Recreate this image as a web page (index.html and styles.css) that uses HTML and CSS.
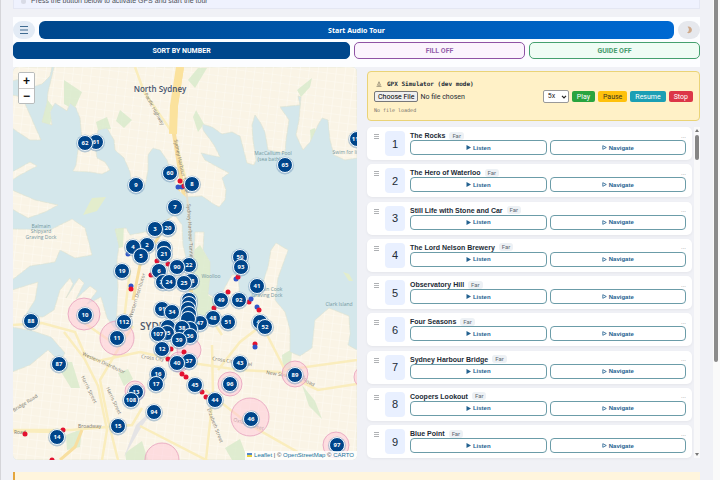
FILE: index.html
```html
<!DOCTYPE html>
<html lang="en">
<head>
<meta charset="utf-8">
<meta name="viewport" content="width=device-width, initial-scale=1">
<title>Sydney Audio Tour</title>
<link rel="stylesheet" href="styles.css">
</head>
<body>
<div class="page">
  <div class="content">
    <div class="notice"><span class="notice-dot"></span><span>Press the button below to activate GPS and start the tour</span></div>
    <header class="toolbar">
      <div class="toolbar-row">
        <button class="round" aria-label="Menu"><svg width="10" height="10" viewBox="0 0 10 10"><path d="M1 1.500h8M1 5h8M1 8.500h8" stroke="#3f6b91" stroke-width="1" fill="none"/></svg></button>
        <button class="start">Start Audio Tour</button>
        <button class="round moon" aria-label="Dark mode"><svg width="8" height="8" viewBox="0 0 8 8"><path d="M2.500.8A3.300 3.300 0 1 1 2 6.800 3.600 3.600 0 0 0 2.500.8Z" fill="#cfa98a"/></svg></button>
      </div>
      <div class="modes">
        <button class="mode sort">SORT BY NUMBER</button>
        <button class="mode fill">FILL OFF</button>
        <button class="mode guide">GUIDE OFF</button>
      </div>
    </header>
    <main class="main">
      <section class="map" aria-label="Tour map">
        <svg class="map-art" viewBox="13 67 344 393" preserveAspectRatio="xMidYMid slice">
          <defs>
            <clipPath id="land-clip"><use href="#land"/></clipPath>
            <pattern id="blocks" width="9" height="8" patternUnits="userSpaceOnUse" patternTransform="rotate(7)"><path d="M0 0H9M0 0V8" stroke="#fffdf8" stroke-width="1.100" fill="none"/></pattern>
          </defs>
          <rect x="12" y="67" width="345" height="393" fill="#d4e7eb"/>
          <path id="land" fill="#faf4e6" stroke="#e0e4d2" stroke-width=".7" d="M12 67H52L50 76 42 84 35 86 20 79 12 81Z
            M54 67 51 80 48 92 47 103 42 122 52 125 50 112 55 103 67 111 70 103 76 108 80 118 82 140 78 150 76 165 73 171 90 172 102 174 110 170 105 162 97 158 95 145 98 130 107 128 114 140 115 150 124 158 130 172 132 185 137 190 145 186 148 170 148 155 153 148 160 150 167 160 172 175 178 190 186 197 202 196 212 203 219 207 225 200 226 190 222 178 229 173 214 165 205 160 201 153 210 155 220 157 214 145 203 130 202 124 212 127 222 134 232 132 240 136 245 155 247 163 254 165 256 160 253 140 252 125 255 115 260 122 265 132 268 150 285 153 286 140 289 120 280 107 300 105 298 96 301 97 299 120 296 135 303 150 310 142 318 125 322 118 328 120 330 140 334 155 345 160 357 158V67Z
            M12 95 22 97 30 115 41 140 30 140 12 128Z M12 172 30 162 37 166 20 175 12 180Z
            M12 190 35 200 58 205 45 212 28 218 12 209Z
            M12 229 50 230 72 219 85 228 92 255 75 258 60 250 55 262 30 266 12 280Z
            M12 290 38 282 35 300 25 316 43 317 54 310 60 290 70 278 73 284 66 298 79 278 84 283 76 299 90 286 97 291 87 304 101 297 107 318 116 330 118 290 117 260 119 246 115 229 126 228 130 235 150 231 160 224 175 215 182 225 183 245 187 262 194 262 195 232 204 232 203 250 210 262 210 275 208 294 219 300 225 287 232 275 238 275 240 298 252 300 260 292 268 267 271 250 276 243 288 250 278 278 275 300 285 312 290 330 290 352 300 356 312 348 315 320 329 308 349 316 350 334 348 345 357 350V460H12V372L30 365 48 350 60 362 65 353 51 337 33 331 12 327Z"/>
          <g clip-path="url(#land-clip)">
            <rect x="12" y="67" width="345" height="393" fill="url(#blocks)" opacity=".75"/>
            <g fill="#d8eacb" opacity=".8">
              <path d="M46 98 54 108 50 125 40 122ZM96 122 107 117 111 129 98 130ZM64 80l18 12-8 18-10-6ZM120 110l12 10-8 8-8-7ZM188 80l10-12h9l-12 20ZM196 110l8 14-6 8-5-15ZM297 90l15-12-2 9-9 10ZM310 130l5-2 2 12-6 5Z"/>
              <path d="M188 255 200 245 212 265 208 295 218 302 203 325 188 305ZM115 229l9-4-1 22-8 2ZM55 362l17 0 8 26-9 0ZM118 373l10-4 5 10-9 7ZM125 453l17-12 6 19h-22ZM225 448l15-9 8 21h-16ZM302 385l13 16 7 18-13-13ZM66 435l16-6-2 18-13 3ZM282 355l10-6-1 18-8 7Z"/>
            </g>
            <path d="M124 457 136 425 158 404 142 426Z" fill="#e5e4e5"/>
            <g fill="none" stroke="#faedbd" stroke-width="2.500">
              <path d="M135 67 144 92 174 135 186 180"/><path d="M12 325 42 323 75 332 85 355 98 361 140 352"/><path d="M64 332 84 358 98 386 107 430 102 460M133 326 120 346 100 380 108 420 118 460M140 426 210 462M212 345 213 395 206 460M130 270 124 320 116 345 80 320"/>
              <path d="M12 430H70L132 425 142 408M12 431 50 432 55 430M140 352 185 362 240 370 280 372 318 390 357 384M218 370 240 342 262 325 285 370 357 360M205 390 250 425 310 459M212 320 222 335"/>
            </g>
            <g fill="none" stroke="#f8dfa0" stroke-width="4">
              <path d="M182 67 176 105 174 134 183 190 191 250 191 330"/><path d="M181 184 170 214 158 238 140 265 133 300" stroke-width="3"/><path d="M60 460 75 447 82 430" stroke-width="3"/>
            </g>
            <path d="M180 67 174 106 173 134" stroke="#fbe29d" stroke-width="8" fill="none"/>
          </g>
          <path d="M83 215 92 198 106 197 97 211ZM343 272l6 2 4 7-4 0Z" fill="#e3edcc"/>
          <path d="M186 186 193 258" stroke="#e6dfcc" stroke-width="2"/>
          <g class="street">
            <text transform="translate(144 94) rotate(61)">Pacific Highway</text>
            <text transform="translate(174 140) rotate(78)">Sydney Harbour Tunnel</text>
            <text transform="translate(187 204) rotate(87)">Sydney Harbour Tunnel</text>
            <text transform="translate(132 318) rotate(-73)">Western Distributor</text>
            <text transform="translate(82 355) rotate(24)">Western Distributor</text>
            <text transform="translate(81 377) rotate(64)">Harris Street</text>
            <text transform="translate(106 388) rotate(65)">Harris Street</text>
            <text transform="translate(14 412) rotate(-32)">Bridge Road</text>
            <text x="14" y="434">Road</text><text x="78" y="428">Broadway</text>
            <text transform="translate(141 358) rotate(8)">Cross City Tunnel</text>
            <text transform="translate(212 360) rotate(9)">Cross City Tunnel</text>
            <text transform="translate(266 374) rotate(8)">New South Head</text>
            <text transform="translate(303 381) rotate(28)">Road</text>
            <text transform="translate(233 421) rotate(17)">Oxford Street</text>
            <text transform="translate(207 409) rotate(69)">Elizabeth Street</text>
          </g>
          <g class="water-label">
            <text x="41" y="228">Balmain</text><text x="41" y="233">Shipyard</text><text x="41" y="239">Graving Dock</text>
            <text x="273" y="155">MacCallum Pool</text><text x="269" y="161">(sea bath)</text><text x="347" y="154">Swim for life</text>
            <text x="267" y="291">Captain Cook</text><text x="267" y="297">Graving Dock</text><text x="211" y="278">Woolloo</text><text x="339" y="306">Clark Island</text>
          </g>
          <text class="district" x="160" y="92">North Sydney</text>
          <text class="city" x="140" y="330">SYDNEY</text>
          <g id="zones"></g>
          <g id="stops"></g>
          <g id="markers"></g>
        </svg>
        <div class="zoom"><button aria-label="Zoom in">+</button><button aria-label="Zoom out">−</button></div>
        <div class="credit"><span class="flag"></span><a href="#leaflet">Leaflet</a> | © <a href="#osm">OpenStreetMap</a> © <a href="#carto">CARTO</a></div>
      </section>
      <section class="side">
        <form class="sim">
          <div class="sim-title"><svg width="6" height="6" viewBox="0 0 6 6"><path d="M3 .7 1.600 4.200H4.400ZM.5 5.400h5" stroke="#8f8671" stroke-width=".8" fill="none"/></svg>GPX Simulator (dev mode)</div>
          <div class="sim-row">
            <input class="file" type="file" aria-label="GPX file">
            <span class="speed">
              <select aria-label="Speed"><option>5x</option></select>
              <svg width="6" height="4" viewBox="0 0 6 4"><path d="M1 .8 3 2.800 5 .8" stroke="#222" stroke-width="1.200" fill="none"/></svg>
            </span>
            <button type="button" class="play">Play</button>
            <button type="button" class="pause">Pause</button>
            <button type="button" class="resume">Resume</button>
            <button type="button" class="stop">Stop</button>
          </div>
          <div class="sim-status">No file loaded</div>
        </form>
        <div class="list-wrap">
          <ol class="list" id="list"></ol>
          <div class="list-bar"><i class="up"></i><i class="thumb"></i><i class="down"></i></div>
        </div>
      </section>
    </main>
    <div class="banner"></div>
  </div>
  <div class="page-bar"><i></i></div>
</div>
<script src="script.js"></script>
</body>
</html>
```
FILE: styles.css
```css
* { box-sizing: border-box; }
body { margin: 0; height: 100vh; overflow: hidden; background: #f0f1f6; font-family: "Liberation Sans", Arial, sans-serif; color: #222b36; }
button, select, input { font: inherit; margin: 0; }
button { cursor: pointer; padding: 0; }
.page { display: flex; height: 100vh; border-left: 1px solid #d5d5d9; }
.content { flex: 1; min-width: 0; padding: 0 13px 0 12px; overflow: hidden; }
.page-bar { width: 7px; background: #fafafa; padding: 0 2px 0 1px; }
.page-bar i { display: block; height: 75.5vh; background: #8b8b8b; border-radius: 0 0 2px 2px; }

.notice { height: 9px; display: flex; align-items: flex-end; gap: 5px; padding: 0 0 3px 7px; background: #eff2fe; border: 1px solid #e4e7f3; border-top: 0; font-size: 7px; line-height: 8px; color: #4b5058; }
.notice-dot { width: 5px; height: 5px; margin-bottom: 1px; border-radius: 50%; background: #d8dbe6; }

.toolbar { margin-top: 8px; padding: 4px 0 8px; background: #fcfdff; }
.toolbar-row { display: flex; gap: 4px; margin-bottom: 3px; }
.toolbar-row button { height: 18px; border: 0; }
.round { display: grid; place-items: center; width: 22px; border-radius: 9px; background: #e3ebf5; }
.toolbar-row .moon { background: #e6e8ed; }
.start { flex: 1; border-radius: 6px; background: linear-gradient(100deg, #00478c, #0069d2); color: #fff; font: bold 7px "Noto Sans", sans-serif; }
.toolbar-row .start { font: bold 7px "DejaVu Sans", sans-serif; font-family: "Noto Sans", sans-serif; }
.modes { display: grid; grid-template-columns: 337fr 171fr 171fr; gap: 4px; }
.mode { height: 17px; border: 1px solid; border-radius: 5px; font: bold 7px Roboto, sans-serif; }
.sort { background: #00478c; border-color: #00478c; color: #fff; }
.fill { background: #fbf4fd; border-color: #8f53a4; color: #9560ab; }
.guide { background: #effcf4; border-color: #45a06e; color: #459b6c; }

.main { display: grid; grid-template-columns: 344fr 333fr; gap: 10px; min-height: 393px; }
.map { position: relative; overflow: hidden; border-radius: 5px; background: #d4e7eb; }
.map-art { position: absolute; inset: 0; width: 100%; height: 100%; }
.zoom { position: absolute; left: 5px; top: 5px; display: grid; border: 1px solid #b9bcbc; border-radius: 2px; overflow: hidden; }
.zoom button { width: 15px; height: 15px; border: 0; background: #fff; color: #111; font-size: 12px; font-weight: bold; line-height: 14px; }
.zoom button + button { border-top: 1px solid #ccc; }
.credit { position: absolute; right: 0; bottom: 0; padding: 0 3px 0 2px; background: #fffc; font-size: 6px; line-height: 9px; color: #444; }
.credit a { color: #16739c; text-decoration: none; }
.flag { display: inline-block; width: 5px; height: 4px; margin-right: 2px; background: linear-gradient(#5387c8 50%, #e5cf3e 50%); }

.street { font: 5px "Open Sans", sans-serif; fill: #7d796e; }
.water-label { font: 5px "Open Sans", sans-serif; fill: #7297a1; text-anchor: middle; }
.district { font: 600 8px "Open Sans", sans-serif; fill: #46546f; text-anchor: middle; }
.city { font: 600 10px "Open Sans", sans-serif; fill: #4f5a6d; }
.pin { fill: #00458a; stroke: #f4fafd; stroke-width: 1; }
.halo { fill: #7199bd; opacity: .5; }
.pin-text { font: bold 6px "Open Sans", sans-serif; fill: #fff; text-anchor: middle; }
.zone { fill: #ffc5d8; fill-opacity: .5; stroke: #e6a0bc; stroke-width: .8; }
.red { fill: #e41230; }
.blue { fill: #3156c8; }

.side { display: flex; flex-direction: column; padding-top: 4px; }
.sim { padding: 6px; border: 1px solid #ead377; border-radius: 4px; background: #fff1c7; font: 7px Roboto, sans-serif; }
.sim-title { display: flex; align-items: center; gap: 5px; padding-left: 2px; font: bold 6px/11px "DejaVu Sans Mono", monospace; }
.sim-row { display: flex; align-items: center; gap: 3px; height: 13px; margin-top: 1px; }
.file { flex: 1; min-width: 0; font-size: 7px; line-height: 10px; }
.file::file-selector-button { height: 11px; margin: 0 2px 0 0; padding: 0 3px; border: 1px solid #777; border-radius: 2px; background: #efefef; font: 7px/8px Roboto, sans-serif; }
.speed { display: grid; align-items: center; }
.speed > * { grid-area: 1 / 1; }
.speed svg { justify-self: end; margin-right: 2px; pointer-events: none; }
.sim select { appearance: none; width: 26px; height: 13px; padding: 0 4px; border: 1px solid #999; border-radius: 2px; background: #fff; color: #222; font-size: 7px; line-height: 11px; }
.sim button { height: 11px; padding: 0 5px; border: 0; border-radius: 2px; color: #fff; }
.sim .play { background: #29a43f; }
.sim .pause { background: #ffc10c; color: #3b351e; }
.sim .resume { background: #1b9fb4; }
.sim .stop { background: #dc3648; }
.sim-status { margin-top: 3px; font: 5px/8px "DejaVu Sans Mono", monospace; color: #77736a; }

.list-wrap { display: flex; flex: 1; gap: 2px; margin-top: 6px; padding-bottom: 2px; }
.list { flex: 1; display: flex; flex-direction: column; justify-content: space-between; margin: 0; padding: 0; list-style: none; }
.card { display: flex; height: 33px; padding: 4px 6px 4px 7px; border-radius: 5px; background: #fff; box-shadow: 0 1px 3px #0000000d; }
.grip { display: block; width: 5px; height: 5px; margin: 3px 6px 0 0; border: solid #aeb0b3; border-width: 1px 0; background: linear-gradient(#0000 33%, #b6b8ba 33% 66%, #0000 66%); }
.number { display: grid; place-items: center; width: 20px; height: 25px; margin-right: 5px; border-radius: 4px; background: #e9f0ff; font-size: 11px; }
.info { flex: 1; }
.name { display: flex; align-items: center; gap: 4px; height: 9px; font-size: 7px; font-weight: bold; }
.far { padding: 0 3px; border-radius: 3px; background: #edf1f5; color: #5f6972; font: 6px/8px Roboto, sans-serif; }
.dist { margin-left: auto; color: #85898e; font-size: 6px; font-weight: normal; }
.actions { display: grid; grid-template-columns: 1fr 1fr; gap: 3px; }
.actions button { display: flex; align-items: center; justify-content: center; gap: 2px; height: 15px; border: 1px solid #6b9ca8; border-radius: 4px; background: #fff; color: #23618f; font-size: 6px; font-weight: bold; }
.list-bar { display: flex; flex-direction: column; align-items: center; width: 6px; padding: 2px 0; background: #f9f9fa; }
.list-bar .thumb { width: 4px; height: 25px; margin-top: 3px; border-radius: 2px; background: #858585; }
.up, .down { border: 2px solid transparent; }
.up { border-top: 0; border-bottom: 3px solid #777; }
.down { margin-top: auto; border-bottom: 0; border-top: 3px solid #777; }
.banner { height: 40px; margin-top: 12px; border-left: 2px solid #e4a53c; background: #fff5dd; }
```
FILE: script.js
```js
const svgNs = "http://www.w3.org/2000/svg";

function draw(parent, tag, attrs, text) {
  const node = document.createElementNS(svgNs, tag);
  for (const key in attrs) node.setAttribute(key, attrs[key]);
  if (text !== undefined) node.textContent = text;
  document.getElementById(parent).append(node);
}

const zones = [[84, 314, 16], [117, 338, 17], [295, 374, 13], [230, 384, 12], [250, 417, 19],
  [336, 445, 13], [162, 460, 17], [135, 391, 10], [189, 350, 12], [179, 362, 10], [365, 377, 11]];
zones.forEach(([cx, cy, r]) => draw("zones", "circle", { class: "zone", cx, cy, r }));

const stops = [[180, 181, "red"], [178, 187, "blue"], [182, 187, "blue"], [184, 186, "red"],
  [128, 254, "blue"], [157, 261, "red"], [168, 264, "red"], [151, 275, "red"], [131, 286, "blue"], [131, 289, "red"],
  [236, 279, "blue"], [238, 277, "red"], [228, 292, "red"], [214, 308, "red"], [249, 302, "red"], [251, 299, "blue"],
  [257, 307, "blue"], [259, 310, "red"], [255, 344, "red"], [255, 347, "blue"], [184, 352, "red"], [171, 349, "red"],
  [168, 359, "red"], [182, 374, "red"], [186, 377, "red"], [202, 392, "red"], [206, 397, "red"], [25, 434, "red"], [63, 430, "red"], [52, 460, "red"]];
stops.forEach(([cx, cy, color]) => draw("stops", "circle", { class: color, cx, cy, r: 2.5 }));

const markers = [[96, 142, 61], [85, 143, 62], [285, 165, 65], [357, 139, 110], [170, 173, 60], [136, 185, 9],
  [192, 184, 8], [175, 207, 7], [168, 228, 20], [155, 229, 3], [147, 245, 2], [133, 247, 4], [141, 256, 5],
  [164, 248, 23], [164, 254, 21], [122, 271, 19], [159, 271, 6], [189, 265, 22], [177, 267, 90],
  [163, 282, 26], [191, 281, 28], [169, 282, 24], [184, 283, 25], [240, 257, 50], [241, 267, 93], [257, 286, 41],
  [239, 300, 92], [221, 300, 49], [260, 322, 42], [265, 327, 52], [228, 322, 51], [213, 318, 48], [200, 323, 47],
  [189, 300, ""], [189, 304, ""], [188, 309, ""], [189, 314, ""], [188, 319, ""],
  [162, 309, 91], [172, 312, 34], [85, 315, 10], [31, 321, 88], [124, 322, 112], [168, 327, ""],
  [190, 329, ""], [182, 328, 38], [167, 333, 95], [158, 334, 107], [190, 336, 36], [179, 340, 39],
  [117, 338, 11], [162, 349, 12], [189, 361, 37], [177, 363, 40], [59, 364, 87], [158, 374, 16], [156, 384, 17],
  [240, 363, 43], [295, 375, 89], [230, 384, 96], [195, 385, 45], [136, 392, 13], [131, 400, 108], [215, 400, 44],
  [154, 412, 94], [118, 426, 15], [57, 437, 14], [251, 419, 46], [337, 445, 97]];
markers.forEach(([cx, cy, label]) => {
  draw("markers", "circle", { class: "halo", cx, cy: cy + 0.5, r: 9 });
  draw("markers", "circle", { class: "pin", cx, cy, r: 7.5 });
  draw("markers", "text", { class: "pin-text", x: cx, y: cy + 2 }, label);
});

const places = ["The Rocks", "The Hero of Waterloo", "Still Life with Stone and Car", "The Lord Nelson Brewery",
  "Observatory Hill", "Four Seasons", "Sydney Harbour Bridge", "Coopers Lookout", "Blue Point"];
document.getElementById("list").innerHTML = places.map((place, i) => `
  <li class="card"><i class="grip"></i><span class="number">${i + 1}</span>
    <div class="info">
      <div class="name"><span>${place}</span><span class="far">Far</span><span class="dist">...</span></div>
      <div class="actions">
        <button><svg width="5" height="5" viewBox="0 0 5 5"><path d="M.5 0 5 2.500.5 5Z" fill="currentColor"/></svg>Listen</button>
        <button><svg width="5" height="5" viewBox="0 0 5 5"><path d="M.8.700 4.300 2.500.8 4.300Z" fill="none" stroke="currentColor" stroke-width=".8"/></svg>Navigate</button>
      </div>
    </div>
  </li>`).join("");
```
